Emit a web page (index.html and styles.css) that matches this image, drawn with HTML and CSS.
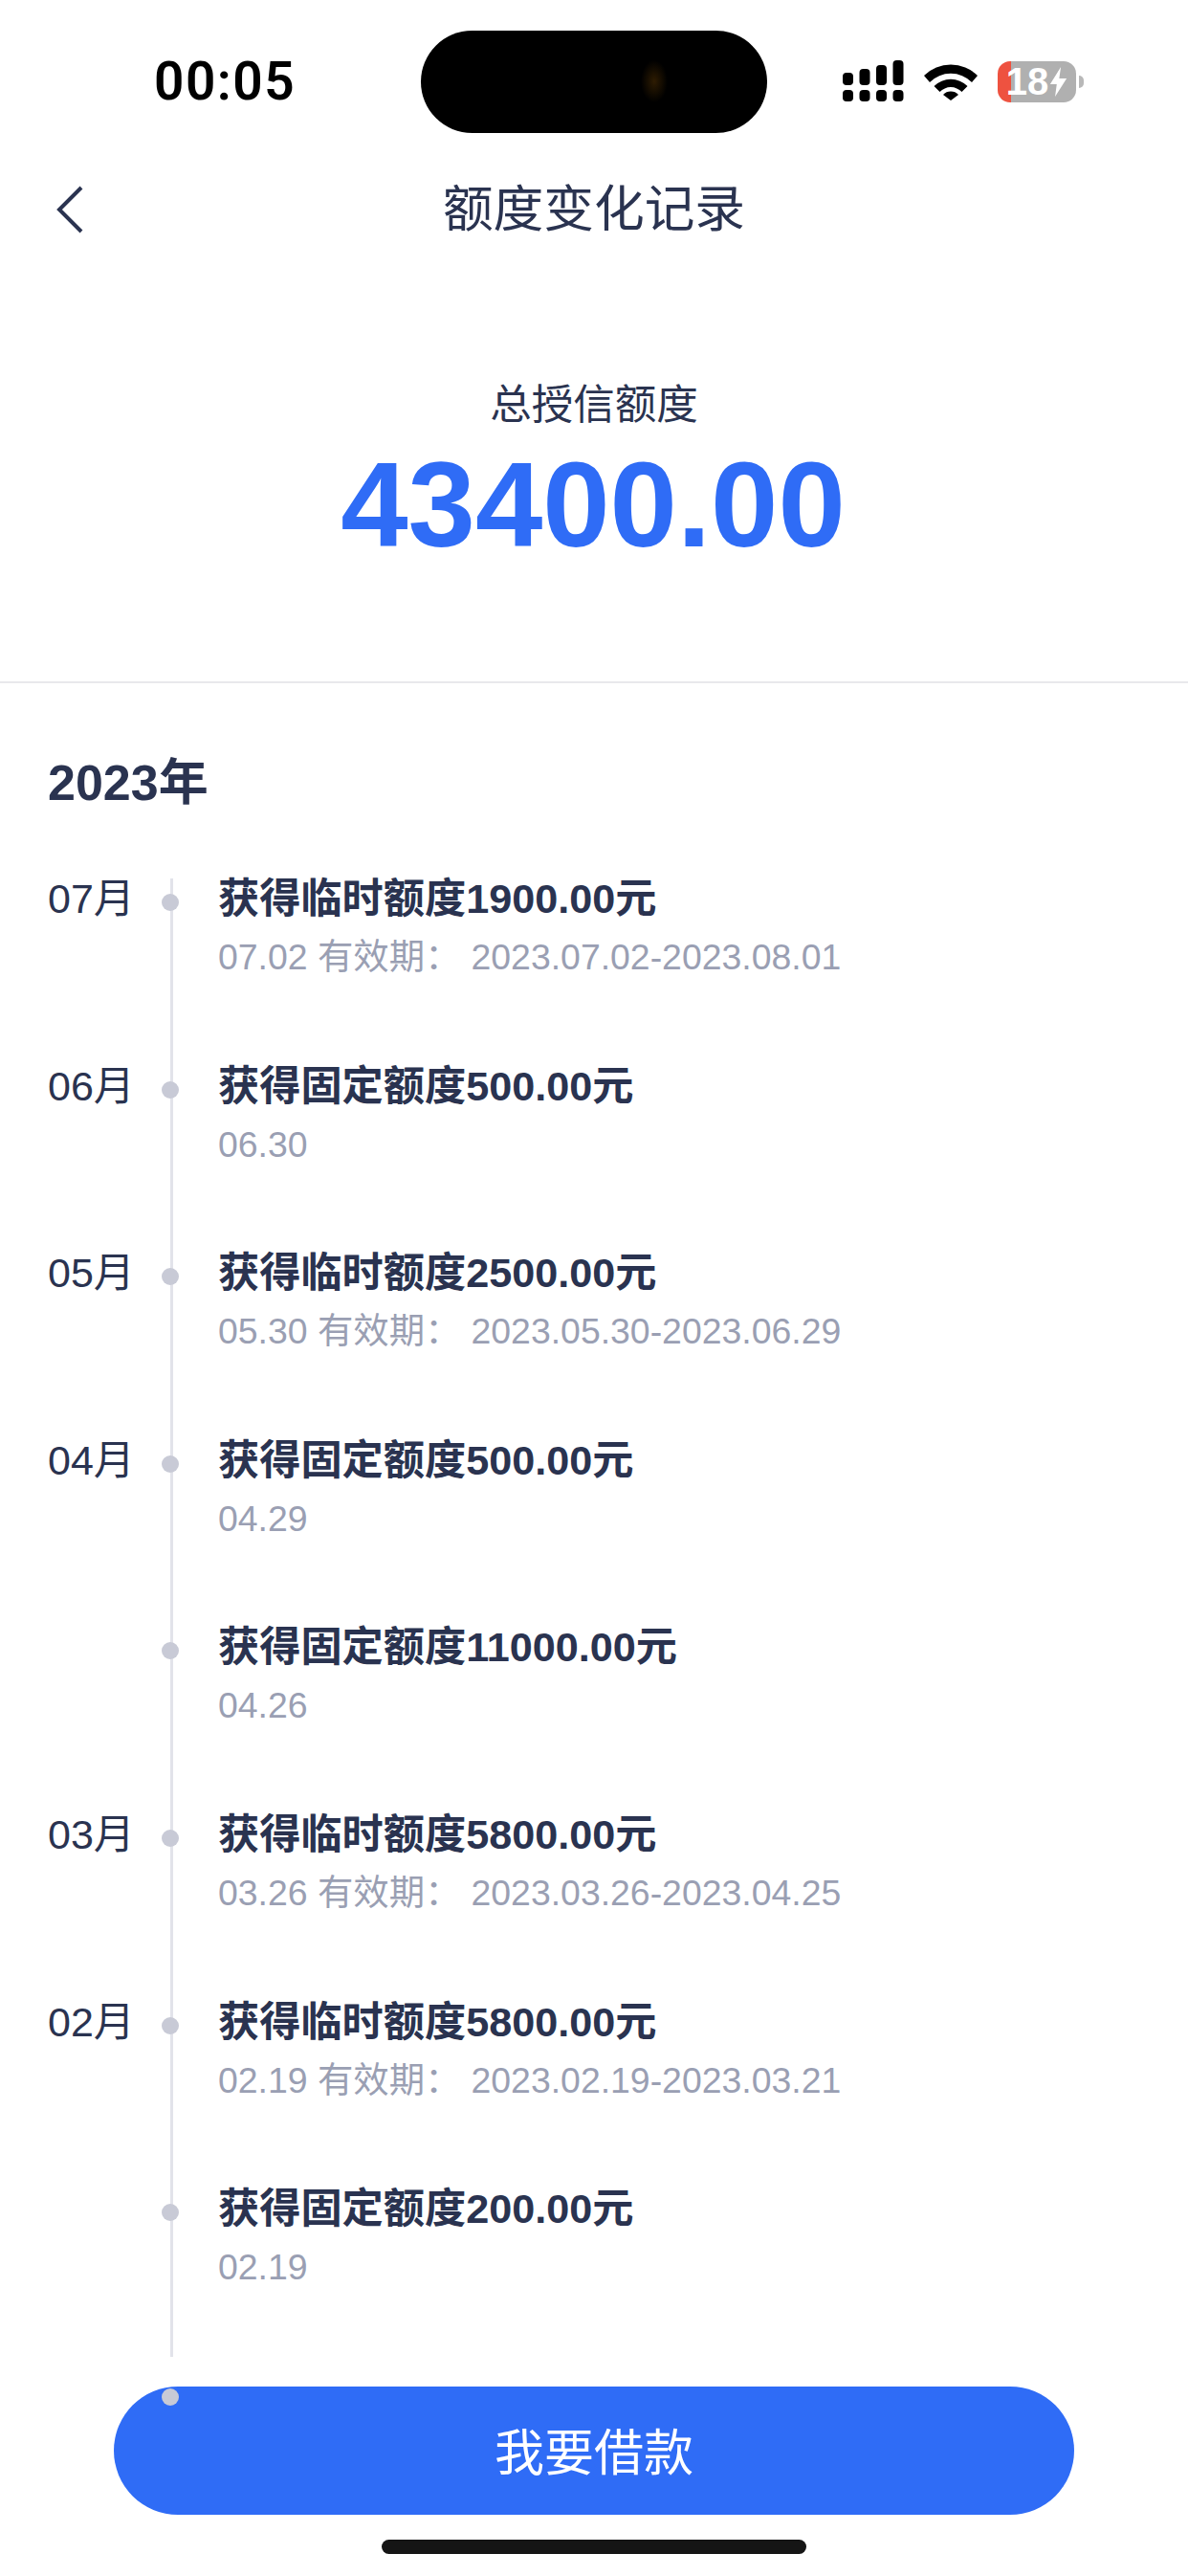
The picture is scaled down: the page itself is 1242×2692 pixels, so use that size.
FILE: index.html
```html
<!DOCTYPE html>
<html lang="zh-CN">
<head>
  <meta charset="UTF-8" />
  <meta name="viewport" content="width=device-width, initial-scale=1.0"/>
  <title>额度变化记录</title>
  <link rel="stylesheet" href="styles.css">
</head>
<body>

  <div class="status-bar">
    <div class="time">00:05</div>
    <div class="island"></div>
    <div class="status-icons">
      <svg class="signal" width="64" height="44" viewBox="0 0 64 44">
        <rect x="0" y="13" width="11" height="13" rx="4"/>
        <rect x="17.500" y="9" width="11" height="17" rx="4"/>
        <rect x="35" y="5" width="11" height="21" rx="4"/>
        <rect x="52.500" y="0" width="11" height="26" rx="4"/>
        <rect x="0" y="31" width="11" height="12" rx="4"/>
        <rect x="17.500" y="31" width="11" height="12" rx="4"/>
        <rect x="35" y="31" width="11" height="12" rx="4"/>
        <rect x="52.500" y="31" width="11" height="12" rx="4"/>
      </svg>
      <svg class="wifi" width="56" height="40" viewBox="0 0 56 40">
        <path d="M0 14 A40 40 0 0 1 56 14 L50 21 A31 31 0 0 0 6 21 Z"/>
        <path d="M10.500 25 A25 25 0 0 1 45.500 25 L39.500 31 A16 16 0 0 0 16.500 31 Z"/>
        <path d="M20 34 A11 11 0 0 1 36 34 L28 40 Z"/>
      </svg>
      <div class="battery">
        <span>18</span>
        <svg width="19" height="31" viewBox="0 0 20 36"><path d="M13 0 L0 21 H8 L6 36 L20 14 H11 Z"/></svg>
      </div>
      <div class="battery-nub"></div>
    </div>
  </div>

  <div class="nav">
    <svg class="back" width="28" height="50" viewBox="0 0 28 50">
      <path d="M26 2 L3 25 L26 48"/>
    </svg>
    <h1>额度变化记录</h1>
  </div>

  <div class="summary">
    <div class="summary-label">总授信额度</div>
    <div class="summary-amount">43400.00</div>
  </div>

  <div class="records">
    <div class="year">2023年</div>

    <div class="timeline">
      <div class="row">
        <div class="month">07月</div>
        <div class="rail"></div>
        <div class="info">
          <div class="title">获得临时额度1900.00元</div>
          <div class="sub">07.02 有效期：<span class="range">2023.07.02-2023.08.01</span></div>
        </div>
      </div>
      <div class="row">
        <div class="month">06月</div>
        <div class="rail"></div>
        <div class="info">
          <div class="title">获得固定额度500.00元</div>
          <div class="sub">06.30</div>
        </div>
      </div>
      <div class="row">
        <div class="month">05月</div>
        <div class="rail"></div>
        <div class="info">
          <div class="title">获得临时额度2500.00元</div>
          <div class="sub">05.30 有效期：<span class="range">2023.05.30-2023.06.29</span></div>
        </div>
      </div>
      <div class="row">
        <div class="month">04月</div>
        <div class="rail"></div>
        <div class="info">
          <div class="title">获得固定额度500.00元</div>
          <div class="sub">04.29</div>
        </div>
      </div>
      <div class="row">
        <div class="month"></div>
        <div class="rail"></div>
        <div class="info">
          <div class="title">获得固定额度11000.00元</div>
          <div class="sub">04.26</div>
        </div>
      </div>
      <div class="row">
        <div class="month">03月</div>
        <div class="rail"></div>
        <div class="info">
          <div class="title">获得临时额度5800.00元</div>
          <div class="sub">03.26 有效期：<span class="range">2023.03.26-2023.04.25</span></div>
        </div>
      </div>
      <div class="row">
        <div class="month">02月</div>
        <div class="rail"></div>
        <div class="info">
          <div class="title">获得临时额度5800.00元</div>
          <div class="sub">02.19 有效期：<span class="range">2023.02.19-2023.03.21</span></div>
        </div>
      </div>
      <div class="row row-end">
        <div class="month"></div>
        <div class="rail"></div>
        <div class="info">
          <div class="title">获得固定额度200.00元</div>
          <div class="sub">02.19</div>
        </div>
      </div>
      <div class="row row-hidden">
        <div class="month"></div>
        <div class="rail"></div>
      </div>
    </div>
  </div>

  <button class="borrow-btn">我要借款</button>
  <div class="home-bar"></div>

</body>
</html>
```

FILE: styles.css
```css
* {
  margin: 0;
  padding: 0;
  box-sizing: border-box;
  font-family: "Liberation Sans", "Noto Sans CJK SC", sans-serif;
}

html, body {
  height: 2692px;
  overflow: hidden;
}

body {
  position: relative;
  background: #ffffff;
  color: #2a3350;
}

/* status bar */
.status-bar {
  height: 170px;
  display: flex;
  align-items: center;
  padding-left: 161px;
}

.time {
  width: 279px;
  font-family: "Roboto", sans-serif;
  font-size: 55px;
  font-weight: 600;
  letter-spacing: 1.500px;
  color: #000000;
}

.island {
  width: 362px;
  height: 107px;
  border-radius: 54px;
  background: radial-gradient(ellipse 14px 22px at 244px 53px, #2e1c02, #000000 100%);
}

.status-icons {
  display: flex;
  align-items: center;
  margin-left: 79px;
}

.signal {
  fill: #000000;
}

.wifi {
  fill: #000000;
  margin-left: 21px;
}

.battery {
  width: 82px;
  height: 43px;
  margin-left: 21px;
  border-radius: 13px;
  background: linear-gradient(90deg, #ee5240 17%, #b0b0b0 17%);
  display: flex;
  align-items: center;
  justify-content: center;
  gap: 1px;
  color: #ffffff;
  font-size: 40px;
  font-weight: bold;
  line-height: 43px;
}

.battery svg {
  fill: #ffffff;
}

.battery-nub {
  width: 5px;
  height: 13px;
  margin-left: 3px;
  border-radius: 0 5px 5px 0;
  background: #b8b8b8;
}

/* nav */
.nav {
  position: relative;
  height: 96px;
  padding-top: 2px;
  display: flex;
  align-items: center;
  justify-content: center;
}

.nav h1 {
  font-size: 52.700px;
  font-weight: 400;
  line-height: 60px;
  color: #2a3350;
}

.back {
  position: absolute;
  left: 59px;
  top: 24px;
  fill: none;
  stroke: #2a3350;
  stroke-width: 4;
}

/* summary */
.summary {
  padding: 132px 0 120px;
  border-bottom: 2px solid #e8e8ec;
  text-align: center;
}

.summary-label {
  font-size: 43.500px;
  line-height: 50px;
}

.summary-amount {
  margin-top: 14px;
  padding-right: 2px;
  font-size: 126.500px;
  font-weight: bold;
  line-height: 130px;
  color: #2f6cf6;
}

/* records */
.records {
  padding: 74px 0 0 50px;
}

.year {
  font-size: 52px;
  font-weight: bold;
  line-height: 60px;
}

.timeline {
  margin-top: 70px;
}

.row {
  height: 195.600px;
  display: grid;
  grid-template-columns: 100px 78px 1fr;
}

.month {
  font-size: 43px;
  line-height: 42px;
}

.rail {
  position: relative;
}

.rail::before {
  content: "";
  position: absolute;
  left: 28px;
  top: 0;
  bottom: 0;
  width: 3px;
  background: #e2e3ea;
}

.rail::after {
  content: "";
  position: absolute;
  left: 19px;
  top: 16px;
  width: 18px;
  height: 18px;
  border-radius: 50%;
  background: #c8cad6;
  z-index: 2;
}

.row-end .rail::before {
  bottom: 20px;
}

.row-hidden .rail::before {
  display: none;
}

.row-hidden .rail::after {
  top: 13px;
}

.title {
  font-size: 43.200px;
  font-weight: bold;
  line-height: 42px;
  white-space: nowrap;
}

.sub {
  margin-top: 18px;
  font-size: 37.400px;
  line-height: 44px;
  color: #9a9fb3;
  white-space: nowrap;
}

.range {
  margin-left: 11px;
}

/* bottom */
.borrow-btn {
  position: absolute;
  left: 119px;
  right: 119px;
  top: 2494px;
  height: 134px;
  padding-bottom: 4px;
  border: none;
  border-radius: 67px;
  background: #2f6cf6;
  color: #ffffff;
  font-size: 52px;
  z-index: 1;
}

.home-bar {
  position: absolute;
  left: 399px;
  top: 2654px;
  width: 444px;
  height: 15px;
  border-radius: 8px;
  background: #151515;
}
```
